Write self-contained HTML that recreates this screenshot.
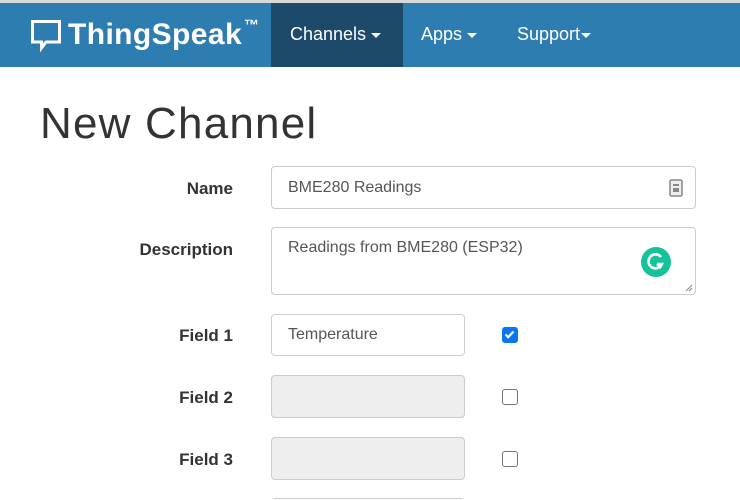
<!DOCTYPE html>
<html><head><meta charset="utf-8"><style>
*{box-sizing:border-box;margin:0;padding:0}
html,body{width:740px;height:500px;overflow:hidden}
body{background:#fff;font-family:"Liberation Sans",sans-serif;position:relative}
.top{position:absolute;left:0;top:0;width:740px;height:3px;background:#d9d9d9}
.nav{position:absolute;left:0;top:3px;width:740px;height:64px;background:#2e7db1}
.act{position:absolute;left:271px;top:0;width:132px;height:64px;background:#1d4a6b}
.ni{position:absolute;top:21px;color:#fff;font-size:18px}
.car{display:inline-block;width:0;height:0;border-left:5px solid transparent;border-right:5px solid transparent;border-top:5px solid #fff;vertical-align:middle;margin-left:5px}
.logo{position:absolute;left:68px;top:15px;color:#fff;font-weight:bold;font-size:30px;letter-spacing:0.4px}
.logo sup{font-size:15px;position:relative;top:-3px;margin-left:2px}
h1{position:absolute;left:40px;top:99px;font-size:44px;font-weight:normal;color:#333;letter-spacing:1.2px}
.lbl{position:absolute;right:507px;font-weight:bold;font-size:17px;color:#333;text-align:right}
.in{position:absolute;left:271px;border:1px solid #ccc;border-radius:4px;background:#fff;font-size:16px;color:#555;padding-left:16px}
.dis{background:#eee}
.cb{position:absolute;left:502px;width:16px;height:16px;border:1.5px solid #767676;border-radius:3px;background:#fff}
.cb.on{background:#0b75f1;border-color:#0b75f1}
</style></head><body>
<div class="top"></div>
<div class="nav">
<svg style="position:absolute;left:31px;top:17px" width="30" height="33" viewBox="0 0 30 33"><path d="M1.5 1.5H28.5V22H15L10.5 28V22H1.5Z" fill="none" stroke="#fff" stroke-width="3"/></svg>
<div class="logo">ThingSpeak<sup>™</sup></div>
<div class="act"></div>
<div class="ni" style="left:290px">Channels<span class="car"></span></div>
<div class="ni" style="left:421px">Apps<span class="car"></span></div>
<div class="ni" style="left:517px">Support<span class="car" style="margin-left:1px"></span></div>
</div>
<h1>New Channel</h1>
<div class="lbl" style="top:179px">Name</div>
<div class="in" style="top:166px;width:425px;height:43px;line-height:41px">BME280 Readings
<svg style="position:absolute;right:12px;top:12px" width="14" height="18" viewBox="0 0 14 18"><rect x="1" y="1" width="12" height="16" rx="1.5" fill="#eee" stroke="#888" stroke-width="1.5"/><rect x="4" y="5" width="6" height="2" fill="#888"/><rect x="4" y="9" width="6" height="4" fill="#888"/></svg></div>
<div class="lbl" style="top:240px">Description</div>
<div class="in" style="top:227px;width:425px;height:68px;padding-top:11px">Readings from BME280 (ESP32)
<svg style="position:absolute;left:369px;top:19px" width="30" height="30" viewBox="0 0 30 30"><circle cx="15" cy="15" r="15" fill="#15c39a"/><path d="M20 10A7 7 0 1 0 21 17H16" fill="none" stroke="#fff" stroke-width="2.6"/><path d="M16 17L20 21" stroke="#fff" stroke-width="2.4"/></svg>
<svg style="position:absolute;right:2px;bottom:2px" width="9" height="9" viewBox="0 0 9 9"><path d="M8 2L2 8M8 5L5 8" stroke="#888" stroke-width="1"/></svg></div>
<div class="lbl" style="top:326px">Field 1</div>
<div class="in" style="top:314px;width:194px;height:42px;line-height:40px">Temperature</div>
<div class="cb on" style="top:327px"><svg width="13" height="13" viewBox="0 0 13 13" style="position:absolute;left:0;top:0"><path d="M2.5 6.5L5.2 9.2L10.5 3.5" fill="none" stroke="#fff" stroke-width="2.2"/></svg></div>
<div class="lbl" style="top:388px">Field 2</div>
<div class="in dis" style="top:375px;width:194px;height:43px"></div>
<div class="cb" style="top:389px"></div>
<div class="lbl" style="top:450px">Field 3</div>
<div class="in dis" style="top:437px;width:194px;height:43px"></div>
<div class="cb" style="top:451px"></div>
<div style="position:absolute;left:273px;top:498px;width:190px;height:2px;border-top:1px solid #ccc"></div>
</body></html>
